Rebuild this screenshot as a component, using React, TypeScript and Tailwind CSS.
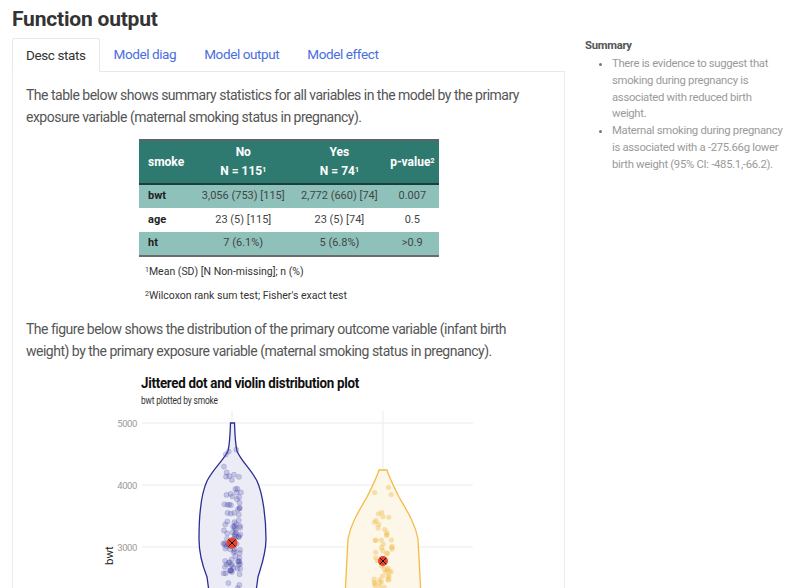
import React from "react";

// seeded random so the jitter is the same every render
const makeRandom = (seed: number) => {
  let s = seed;
  return () => {
    s = (s * 16807) % 2147483647;
    return (s - 1) / 2147483646;
  };
};

const makePoints = (seed: number, n: number, cx: number, meanY: number, sd: number, minY: number) => {
  const rand = makeRandom(seed);
  const pts: { x: number; y: number }[] = [];
  for (let i = 0; i < n; i++) {
    const u = rand() || 0.0001;
    const v = rand();
    let y = meanY + sd * Math.sqrt(-2 * Math.log(u)) * Math.cos(2 * Math.PI * v);
    if (y < minY) y = minY + rand() * 20;
    pts.push({ x: cx + (rand() - 0.5) * 18, y });
  }
  return pts;
};

const bluePoints = makePoints(7, 115, 231, 544, 47, 446);
const orangePoints = makePoints(13, 74, 382, 562, 41, 486);

const tabs = ["Desc stats", "Model diag", "Model output", "Model effect"];

const rows = [
  { name: "bwt", no: "3,056 (753) [115]", yes: "2,772 (660) [74]", p: "0.007", shade: true },
  { name: "age", no: "23 (5) [115]", yes: "23 (5) [74]", p: "0.5", shade: false },
  { name: "ht", no: "7 (6.1%)", yes: "5 (6.8%)", p: ">0.9", shade: true },
];

const Plot = () => {
  const blueViolin =
    "M229.5 424 L233.5 424 C234 440 235 448 236 452 C240 462 250 470 256 482 C262 495 265 520 265 540 C265 555 260 568 257 578 L254 600 L209 600 L206 578 C202 568 198 555 198 540 C198 520 200 495 206 482 C212 470 222 462 227 452 C228 448 229 440 229.5 424 Z";
  const orangeViolin =
    "M378 471 L386 471 C388 478 392 486 398 498 C406 512 414 524 417 540 C418 560 419 575 420 600 L344 600 C345 575 346 560 347 540 C350 524 358 512 366 498 C372 486 376 478 378 471 Z";
  return (
    <svg width={470} height={180} viewBox="95 410 470 180" className="ml-[70px] block">
      {[424, 486, 548].map((y) => (
        <line key={y} x1={141} x2={472} y1={y} y2={y} stroke="#ebebeb" strokeWidth={1} />
      ))}
      <line x1={231} x2={231} y1={412} y2={600} stroke="#ebebeb" />
      <line x1={382} x2={382} y1={412} y2={600} stroke="#ebebeb" />
      {[
        ["5000", 424],
        ["4000", 486],
        ["3000", 548],
      ].map(([t, y]) => (
        <text key={t} x={136} y={(y as number) + 3.5} textAnchor="end" fontSize={9.5} letterSpacing={-0.4} fill="#9a9a9a" fontFamily="Roboto, sans-serif">
          {t}
        </text>
      ))}
      <text x={0} y={0} transform="translate(112 566) rotate(-90)" fontSize={11.5} fill="#222" fontFamily="Roboto, sans-serif">
        bwt
      </text>
      <path d={blueViolin} fill="#ececf6" stroke="#2c2c96" strokeWidth={1.3} />
      <path d={orangeViolin} fill="#fdf7ea" stroke="#f5bb45" strokeWidth={1.3} />
      {bluePoints.map((p, i) => (
        <circle key={i} cx={p.x} cy={p.y} r={2.6} fill="#4646a8" fillOpacity={0.25} stroke="#4646a8" strokeOpacity={0.28} strokeWidth={0.6} />
      ))}
      {orangePoints.map((p, i) => (
        <circle key={i} cx={p.x} cy={p.y} r={2.6} fill="#f2c25a" fillOpacity={0.45} />
      ))}
      <circle cx={231} cy={544} r={5.5} fill="#e8432c" />
      <path d="M227.5 540.5 L234.5 547.5 M234.5 540.5 L227.5 547.5" stroke="#111" strokeWidth={1} />
      <circle cx={382} cy={562} r={5} fill="#e8432c" />
      <path d="M379 559 L385 565 M385 559 L379 565" stroke="#111" strokeWidth={1} />
    </svg>
  );
};

const App = () => {
  return (
    <div className="flex pl-3 pt-[5px] font-['Roboto',sans-serif] text-[#555] bg-white overflow-hidden h-[588px]">
      <div className="w-[553px] shrink-0">
        <h2 className="text-[21px] font-bold text-[#333] leading-[28px] tracking-[-0.2px]">Function output</h2>
        <div className="mt-[5px] flex h-[34px] border-b border-[#e8e8e8] tracking-[-0.4px]">
          {tabs.map((t, i) =>
            i === 0 ? (
              <div key={t} className="-mb-px flex items-center border border-b-white border-[#e8e8e8] bg-white px-[13px] text-[13.5px] text-[#333] rounded-t-[3px]">
                {t}
              </div>
            ) : (
              <div key={t} className="flex items-center px-[14px] text-[13.5px] text-[#4a6ee0]">
                {t}
              </div>
            )
          )}
        </div>
        <div className="border-x border-[#ececec] px-[13px] pt-[13px] h-[600px]">
          <p className="text-[14px] leading-[21.5px] tracking-[-0.5px]">
            The table below shows summary statistics for all variables in the model by the primary exposure variable (maternal smoking status in pregnancy).
          </p>
          <div className="ml-[113px] mt-[11px] w-[300px]">
            <table className="w-full border-collapse text-[11px]">
              <thead>
                <tr className="bg-[#2f7a70] text-white font-bold text-[12px] border-t-2 border-[#5a6664] border-b-2 border-b-[#1d3f3b]">
                  <th className="text-left pl-[9px] h-[44px] font-bold">smoke</th>
                  <th className="font-bold leading-[19px]">
                    No
                    <br />
                    N = 115<sup className="text-[7px]">1</sup>
                  </th>
                  <th className="font-bold leading-[19px]">
                    Yes
                    <br />
                    N = 74<sup className="text-[7px]">1</sup>
                  </th>
                  <th className="font-bold">
                    p-value<sup className="text-[7px]">2</sup>
                  </th>
                </tr>
              </thead>
              <tbody>
                {rows.map((r, i) => (
                  <tr key={r.name} className={`${r.shade ? "bg-[#8fc1bb]" : "bg-white"} ${i === rows.length - 1 ? "border-b-2 border-[#6b6b6b]" : ""} h-[24px] text-[#444]`}>
                    <td className="pl-[9px] font-bold text-[#222]">{r.name}</td>
                    <td className="text-center">{r.no}</td>
                    <td className="text-center">{r.yes}</td>
                    <td className="text-center">{r.p}</td>
                  </tr>
                ))}
              </tbody>
            </table>
            <p className="mt-[3px] ml-[6px] text-[10.5px] text-[#333] leading-[24px]">
              <sup className="text-[7px]">1</sup>Mean (SD) [N Non-missing]; n (%)
            </p>
            <p className="ml-[6px] text-[10.5px] text-[#333] leading-[24px]">
              <sup className="text-[7px]">2</sup>Wilcoxon rank sum test; Fisher's exact test
            </p>
          </div>
          <p className="mt-[11px] text-[14px] leading-[21.5px] tracking-[-0.5px]">
            The figure below shows the distribution of the primary outcome variable (infant birth weight) by the primary exposure variable (maternal smoking status in pregnancy).
          </p>
          <div className="mt-[13px] ml-[115px]">
            <div className="text-[14.5px] font-bold text-[#111] leading-[18px] tracking-[-0.3px] origin-left scale-x-[0.92] whitespace-nowrap">
              Jittered dot and violin distribution plot
            </div>
            <div className="text-[10.5px] text-[#333] leading-[16px] tracking-[-0.2px] origin-left scale-x-[0.8] whitespace-nowrap">
              bwt plotted by smoke
            </div>
          </div>
          <Plot />
        </div>
      </div>
      <div className="ml-5 w-[200px] pt-[31px] text-[11.3px] tracking-[-0.3px]">
        <div className="font-bold text-[#555] leading-[20px]">Summary</div>
        <ul className="list-disc pl-[27px] text-[#9a9a9a] leading-[16.8px] marker:text-[#777]">
          <li>There is evidence to suggest that smoking during pregnancy is associated with reduced birth weight.</li>
          <li>Maternal smoking during pregnancy is associated with a -275.66g lower birth weight (95% CI: -485.1,-66.2).</li>
        </ul>
      </div>
    </div>
  );
};

export default App;
